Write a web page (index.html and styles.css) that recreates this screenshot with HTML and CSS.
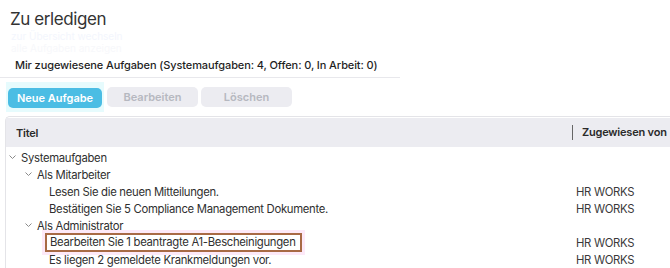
FILE: index.html
```html
<!DOCTYPE html>
<html lang="de">
<head>
  <meta charset="UTF-8" />
  <title>Zu erledigen</title>
  <link rel="stylesheet" href="styles.css">
</head>
<body>
  <div class="page">
    <h1>Zu erledigen</h1>
    <div class="ghost">zur Übersicht wechseln</div>
    <div class="ghost small">alle Aufgaben anzeigen</div>

    <div class="summary">Mir zugewiesene Aufgaben (Systemaufgaben: 4, Offen: 0, In Arbeit: 0)</div>

    <div class="toolbar">
      <div class="glow"><button class="btn primary">Neue Aufgabe</button></div>
      <button class="btn">Bearbeiten</button>
      <button class="btn">Löschen</button>
    </div>

    <div class="panel">
      <div class="head">
        <div class="col-title">Titel</div>
        <div class="col-by">Zugewiesen von</div>
      </div>

      <div class="row lvl0">
        <svg class="chev" width="7" height="4" viewBox="0 0 7 4"><polyline points="0.5,0.5 3.5,3.5 6.5,0.5" /></svg>
        Systemaufgaben
      </div>
      <div class="row lvl1">
        <svg class="chev" width="7" height="4" viewBox="0 0 7 4"><polyline points="0.5,0.5 3.5,3.5 6.5,0.5" /></svg>
        Als Mitarbeiter
      </div>
      <div class="row lvl2"><span class="t">Lesen Sie die neuen Mitteilungen.</span><span class="by">HR WORKS</span></div>
      <div class="row lvl2"><span class="t">Bestätigen Sie 5 Compliance Management Dokumente.</span><span class="by">HR WORKS</span></div>
      <div class="row lvl1">
        <svg class="chev" width="7" height="4" viewBox="0 0 7 4"><polyline points="0.5,0.5 3.5,3.5 6.5,0.5" /></svg>
        Als Administrator
      </div>
      <div class="row lvl2"><span class="t"><span class="mark">Bearbeiten Sie 1 beantragte A1-Bescheinigungen</span></span><span class="by">HR WORKS</span></div>
      <div class="row lvl2"><span class="t">Es liegen 2 gemeldete Krankmeldungen vor.</span><span class="by">HR WORKS</span></div>
    </div>
  </div>
</body>
</html>
```

FILE: styles.css
```css
* {
  box-sizing: border-box;
  margin: 0;
  padding: 0;
}

body {
  font-family: Inter, 'Noto Sans', sans-serif;
  background: #fff;
  color: #2f2f2f;
  overflow: hidden;
}

.page {
  height: 268px;
  overflow: hidden;
  padding-top: 8px;
}

h1 {
  font-size: 17px;
  font-weight: 400;
  letter-spacing: -0.4px;
  color: #333;
  line-height: 22px;
  padding-left: 10px;
}

.ghost {
  font-size: 10px;
  line-height: 13px;
  color: #f3f6fd;
  padding-left: 11px;
}

.ghost.small {
  color: #f7f8fb;
  line-height: 10px;
}

.summary {
  font-size: 11px;
  font-weight: 500;
  letter-spacing: -0.1px;
  color: #1f1f1f;
  padding: 5px 0 5px 15px;
  width: 400px;
  border-bottom: 1px solid #e8e8ec;
  white-space: nowrap;
}

.toolbar {
  display: flex;
  align-items: center;
  gap: 3px;
  padding: 4px 0 0 6px;
}

.glow {
  padding: 4px 2px;
  background: #e6fbfd;
}

.btn {
  font-family: Inter, sans-serif;
  font-size: 11px;
  font-weight: 600;
  width: 91px;
  height: 20px;
  border: none;
  border-radius: 5px;
  background: #ececf1;
  color: #b6b8c0;
}

.btn.primary {
  width: 94px;
  background: #4bbde4;
  color: #fff;
}

.panel {
  margin: 4px 0 0 5px;
  border: 1px solid #e4e4e8;
  border-right: none;
  border-bottom: none;
  border-radius: 5px 0 0 0;
  height: 153px;
}

.head {
  display: flex;
  align-items: center;
  height: 29px;
  margin-top: 1px;
  margin-bottom: 2px;
  background: #ececf1;
  font-size: 11px;
  font-weight: 600;
  letter-spacing: -0.2px;
  color: #2a2a2a;
  white-space: nowrap;
}

.col-title {
  flex: 1;
  padding-left: 10px;
}

.col-by {
  width: 98px;
  padding-left: 9px;
  border-left: 1px solid #666;
  line-height: 15px;
}

.row {
  display: flex;
  align-items: center;
  height: 17px;
  font-size: 11.3px;
  letter-spacing: -0.3px;
  color: #2f2f2f;
  white-space: nowrap;
}

.lvl0 { padding-left: 3px; }
.lvl1 { padding-left: 19px; }
.lvl2 { padding-left: 43px; }

.chev {
  fill: none;
  stroke: #8a8a8a;
  stroke-width: 1;
  margin: 0 5px 2px 0;
}

.t {
  flex: 1;
}

.mark {
  display: inline-block;
  height: 19px;
  line-height: 15px;
  padding: 0 4px 0 3px;
  margin-left: -4px;
  border: 2px solid #a86a45;
  box-shadow: 0 0 0 3px #fde9f8;
}

.by {
  width: 94px;
  color: #3a3a3a;
}
```
